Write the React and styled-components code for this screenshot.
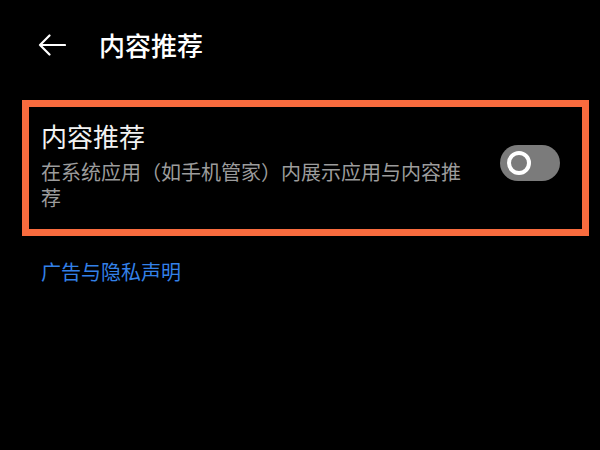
import React from "react";
import styled, { createGlobalStyle } from "styled-components";

const GlobalStyle = createGlobalStyle`
  html, body {
    margin: 0;
    padding: 0;
    background: #000;
  }
  body {
    font-family: "Noto Sans CJK SC", "Noto Sans", sans-serif;
    color: #fff;
  }
`;

const Page = styled.div`
  width: 600px;
  height: 450px;
  background: #000;
  overflow: hidden;
`;

const Header = styled.header`
  display: flex;
  align-items: center;
  height: 90px;
  padding-left: 38px;
  gap: 33px;
`;

const BackButton = styled.button`
  display: flex;
  align-items: center;
  padding: 0;
  border: none;
  background: none;
  cursor: pointer;
`;

const HeaderTitle = styled.h1`
  margin: 0;
  font-size: 26px;
  font-weight: 500;
  line-height: 32px;
  color: #fff;
`;

const SettingRow = styled.div`
  display: flex;
  align-items: center;
  gap: 30px;
  margin: 10px 11px 0 22px;
  padding: 14px 22px 18px 12px;
  border: 7px solid #f86b3e;
`;

const TextBlock = styled.div`
  flex: 1;
  display: flex;
  flex-direction: column;
  gap: 8px;
`;

const RowTitle = styled.div`
  font-size: 26px;
  line-height: 30px;
  color: #f2f2f2;
`;

const RowDesc = styled.div`
  font-size: 20px;
  line-height: 26px;
  color: #9c9c9c;
`;

const Track = styled.div`
  flex: none;
  display: flex;
  align-items: center;
  width: 60px;
  height: 36px;
  margin-bottom: 7px;
  padding-left: 7px;
  box-sizing: border-box;
  border-radius: 18px;
  background: ${(p) => (p.$on ? "#3381e8" : "#7b7b7b")};
`;

const Knob = styled.div`
  width: 24px;
  height: 24px;
  box-sizing: border-box;
  border-radius: 50%;
  border: 4px solid #fff;
`;

const Link = styled.a`
  display: block;
  margin: 23px 0 0 41px;
  font-size: 20px;
  line-height: 26px;
  color: #3381e8;
  text-decoration: none;
`;

const ArrowIcon = () => (
  <svg width="28" height="22" viewBox="0 0 28 22" fill="none">
    <path
      d="M27 11H2M11.5 1.5L2 11l9.5 9.5"
      stroke="#fff"
      strokeWidth="2.2"
      strokeLinecap="round"
      strokeLinejoin="round"
    />
  </svg>
);

const App = () => {
  return (
    <Page>
      <GlobalStyle />
      <Header>
        <BackButton aria-label="返回">
          <ArrowIcon />
        </BackButton>
        <HeaderTitle>内容推荐</HeaderTitle>
      </Header>
      <SettingRow>
        <TextBlock>
          <RowTitle>内容推荐</RowTitle>
          <RowDesc>在系统应用（如手机管家）内展示应用与内容推荐</RowDesc>
        </TextBlock>
        <Track $on={false}>
          <Knob />
        </Track>
      </SettingRow>
      <Link href="#">广告与隐私声明</Link>
    </Page>
  );
};

export default App;
